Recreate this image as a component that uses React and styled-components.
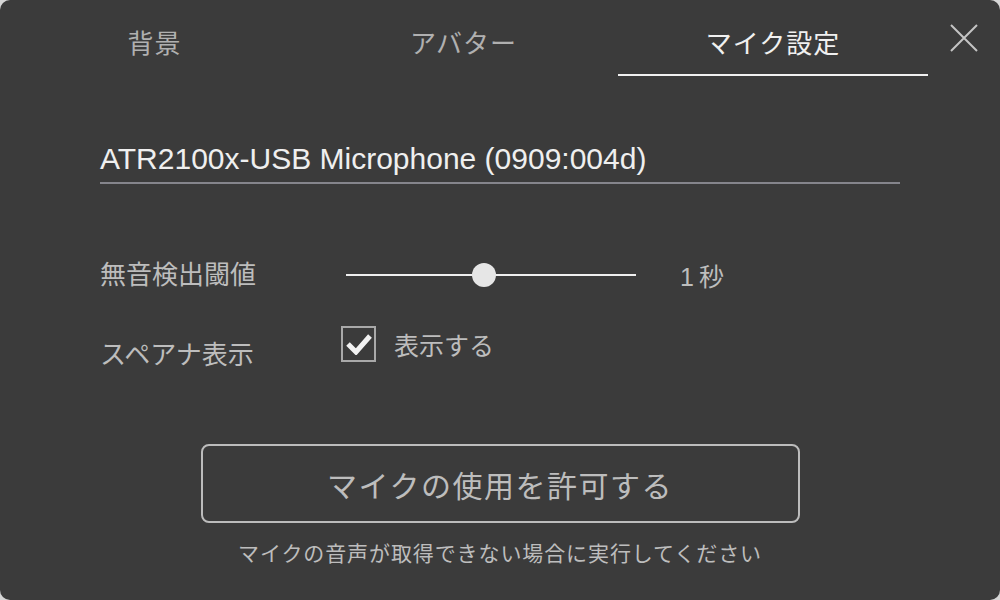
import React, { useState } from 'react'
import styled, { createGlobalStyle } from 'styled-components'

const GlobalStyle = createGlobalStyle`
  html, body {
    margin: 0;
    padding: 0;
    background: #d6d6d6;
  }
  * { box-sizing: border-box; }
`

const font = `"Liberation Sans", "Noto Sans CJK JP", sans-serif`

const Panel = styled.div`
  width: 1000px;
  height: 600px;
  background: #3b3b3b;
  border-radius: 10px;
  overflow: hidden;
  font-family: ${font};
  color: #bdbdbd;
  display: flex;
  flex-direction: column;
`

const Header = styled.div`
  display: flex;
  align-items: stretch;
  height: 76px;
`

const Tabs = styled.div`
  display: grid;
  grid-template-columns: 309px 309px 310px;
  width: 928px;
`

const Tab = styled.div`
  display: flex;
  align-items: center;
  justify-content: center;
  padding-top: 9px;
  font-size: 26px;
  letter-spacing: 1px;
  color: ${p => (p.active ? '#f0f0f0' : '#b0b0b0')};
  border-bottom: 2px solid ${p => (p.active ? '#f0f0f0' : 'transparent')};
  cursor: pointer;
`

const Close = styled.button`
  flex: 1;
  background: none;
  border: none;
  padding: 0;
  display: flex;
  align-items: center;
  justify-content: center;
  cursor: pointer;
`

const Body = styled.div`
  padding: 66px 100px 0 100px;
  display: flex;
  flex-direction: column;
`

const Select = styled.div`
  font-size: 30px;
  line-height: 34px;
  color: #efefef;
  padding-bottom: 6px;
  border-bottom: 2px solid #85858c;
`

const Rows = styled.div`
  margin-top: 72px;
  display: flex;
  flex-direction: column;
  gap: 32px;
`

const Row = styled.div`
  display: grid;
  grid-template-columns: 246px 290px auto;
  align-items: ${p => p.align || 'center'};
`

const Label = styled.div`
  font-size: 26px;
  line-height: 38px;
  color: #bdbdbd;
  padding-top: ${p => p.offset || 0}px;
`

const Track = styled.div`
  position: relative;
  height: 2px;
  background: #efefef;
`

const Thumb = styled.div`
  position: absolute;
  top: 50%;
  width: 24px;
  height: 24px;
  margin: -12px 0 0 -12px;
  border-radius: 50%;
  background: #e6e6e6;
`

const Value = styled.div`
  font-size: 25px;
  padding-left: 44px;
  letter-spacing: 5px;
`

const CheckLabel = styled.label`
  display: flex;
  align-items: center;
  gap: 18px;
  font-size: 25px;
  color: #bdbdbd;
  cursor: pointer;
  margin-left: -5px;
`

const Box = styled.span`
  width: 35px;
  height: 36px;
  border: 2px solid #a9a9a9;
  display: flex;
  align-items: center;
  justify-content: center;
`

const Footer = styled.div`
  margin-top: 70px;
  display: flex;
  flex-direction: column;
  align-items: center;
`

const AllowButton = styled.button`
  width: 599px;
  height: 79px;
  border: 2px solid #bcbcbc;
  border-radius: 8px;
  background: transparent;
  color: #bdbdbd;
  font-family: ${font};
  font-size: 30px;
  letter-spacing: 1.5px;
  cursor: pointer;
`

const Note = styled.div`
  margin-top: 16px;
  font-size: 21px;
  line-height: 30px;
  color: #bdbdbd;
  letter-spacing: 0.9px;
`

const tabs = ['背景', 'アバター', 'マイク設定']

export default function App() {
  const [active, setActive] = useState(2)
  const [checked, setChecked] = useState(true)
  const level = 0.476

  return (
    <>
      <GlobalStyle />
      <Panel>
        <Header>
          <Tabs>
            {tabs.map((t, i) => (
              <Tab key={t} active={i === active} onClick={() => setActive(i)}>
                {t}
              </Tab>
            ))}
          </Tabs>
          <Close aria-label="close">
            <svg width="30" height="30" viewBox="0 0 30 30">
              <path d="M2 2 L28 28 M28 2 L2 28" stroke="#c4c4c4" strokeWidth="2" />
            </svg>
          </Close>
        </Header>
        <Body>
          <Select>ATR2100x-USB Microphone (0909:004d)</Select>
          <Rows>
            <Row>
              <Label>無音検出閾値</Label>
              <Track>
                <Thumb style={{ left: `${level * 100}%` }} />
              </Track>
              <Value>1秒</Value>
            </Row>
            <Row align="start">
              <Label offset={10}>スペアナ表示</Label>
              <CheckLabel onClick={() => setChecked(!checked)}>
                <Box>
                  {checked && (
                    <svg width="26" height="22" viewBox="0 0 26 22">
                      <path d="M2 11 L10 19 L24 3" fill="none" stroke="#f2f2f2" strokeWidth="5" />
                    </svg>
                  )}
                </Box>
                表示する
              </CheckLabel>
            </Row>
          </Rows>
        </Body>
        <Footer>
          <AllowButton>マイクの使用を許可する</AllowButton>
          <Note>マイクの音声が取得できない場合に実行してください</Note>
        </Footer>
      </Panel>
    </>
  )
}
